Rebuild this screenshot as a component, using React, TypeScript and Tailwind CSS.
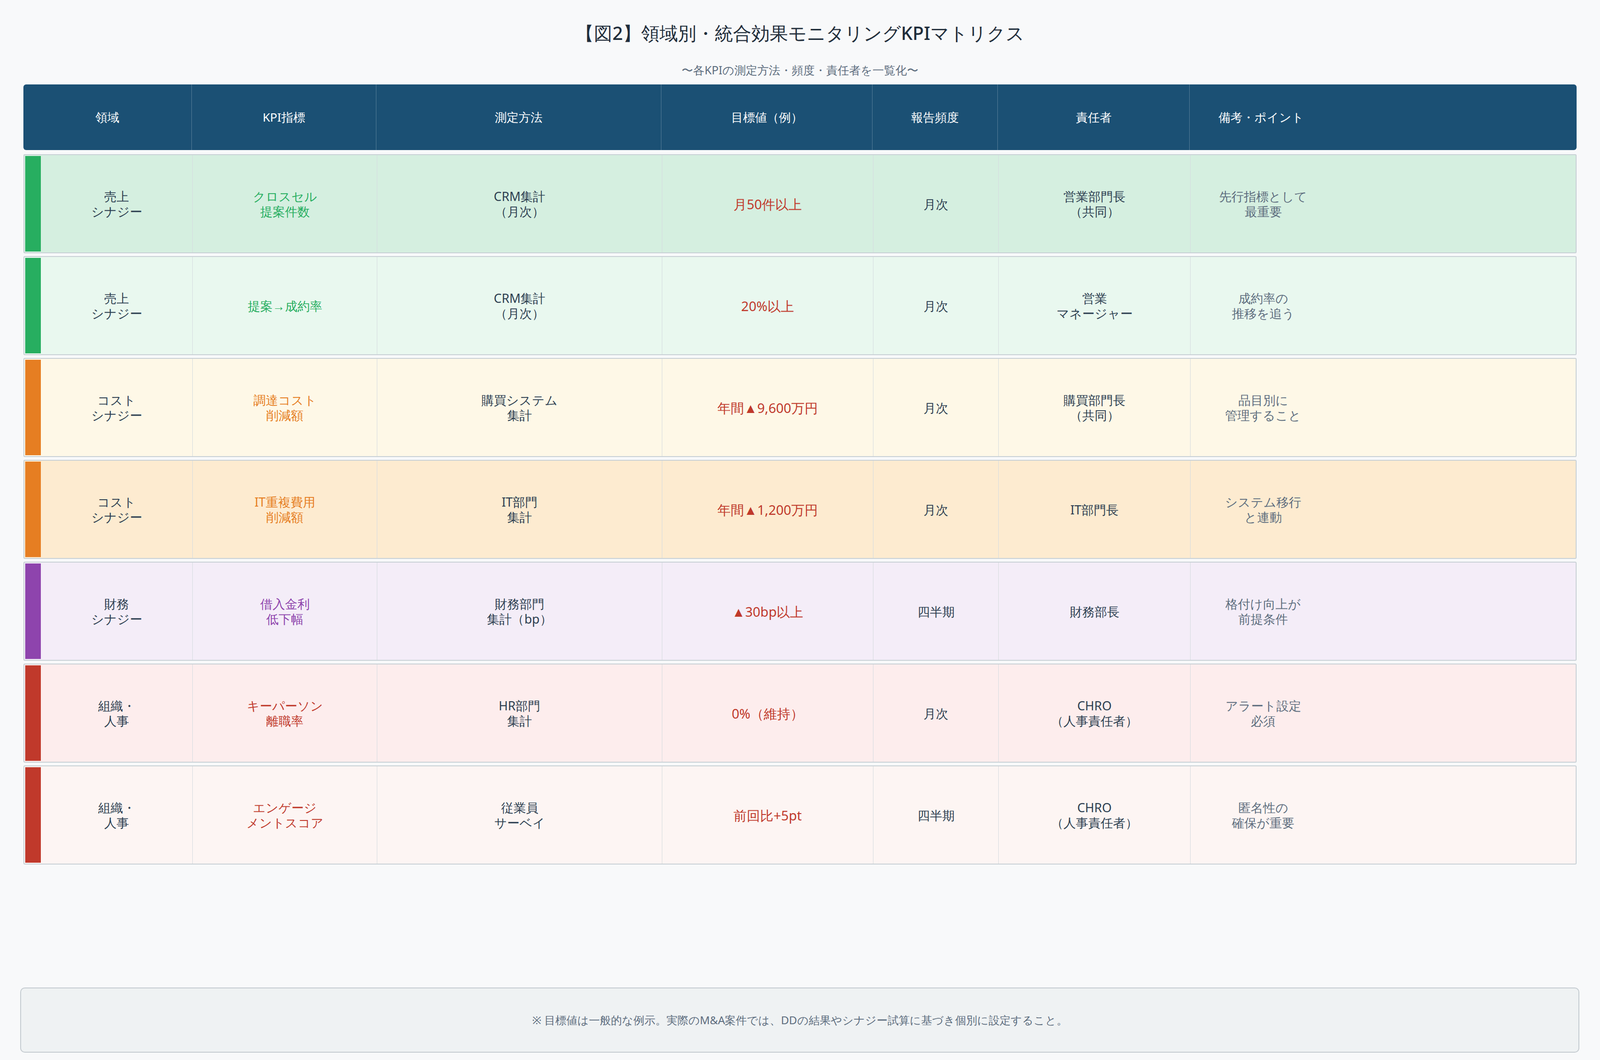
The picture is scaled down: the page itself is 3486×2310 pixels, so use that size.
const FONT = "font-['Noto_Sans_CJK_JP','Noto_Sans',sans-serif]";

const COLS = ['w-[367px]', 'w-[402px]', 'w-[621px]', 'w-[460px]', 'w-[273px]', 'w-[418px]', 'flex-1'];
const HEADERS = ['領域', 'KPI指標', '測定方法', '目標値（例）', '報告頻度', '責任者', '備考・ポイント'];

type Row = {
  bg: string; bar: string; kpiColor: string;
  area: string; kpi: string; method: string; target: string; freq: string; owner: string; note: string;
};

const ROWS: Row[] = [
  { bg: 'bg-[#d5efe0]', bar: 'bg-[#27ae60]', kpiColor: 'text-[#27ae60]', area: '売上\nシナジー', kpi: 'クロスセル\n提案件数', method: 'CRM集計\n（月次）', target: '月50件以上', freq: '月次', owner: '営業部門長\n（共同）', note: '先行指標として\n最重要' },
  { bg: 'bg-[#e9f8ef]', bar: 'bg-[#27ae60]', kpiColor: 'text-[#27ae60]', area: '売上\nシナジー', kpi: '提案→成約率', method: 'CRM集計\n（月次）', target: '20%以上', freq: '月次', owner: '営業\nマネージャー', note: '成約率の\n推移を追う' },
  { bg: 'bg-[#fef8e7]', bar: 'bg-[#e67e22]', kpiColor: 'text-[#e67e22]', area: 'コスト\nシナジー', kpi: '調達コスト\n削減額', method: '購買システム\n集計', target: '年間▲9,600万円', freq: '月次', owner: '購買部門長\n（共同）', note: '品目別に\n管理すること' },
  { bg: 'bg-[#fdebd0]', bar: 'bg-[#e67e22]', kpiColor: 'text-[#e67e22]', area: 'コスト\nシナジー', kpi: 'IT重複費用\n削減額', method: 'IT部門\n集計', target: '年間▲1,200万円', freq: '月次', owner: 'IT部門長', note: 'システム移行\nと連動' },
  { bg: 'bg-[#f4edf8]', bar: 'bg-[#8e44ad]', kpiColor: 'text-[#8e44ad]', area: '財務\nシナジー', kpi: '借入金利\n低下幅', method: '財務部門\n集計（bp）', target: '▲30bp以上', freq: '四半期', owner: '財務部長', note: '格付け向上が\n前提条件' },
  { bg: 'bg-[#fdeded]', bar: 'bg-[#c0392b]', kpiColor: 'text-[#c0392b]', area: '組織・\n人事', kpi: 'キーパーソン\n離職率', method: 'HR部門\n集計', target: '0%（維持）', freq: '月次', owner: 'CHRO\n（人事責任者）', note: 'アラート設定\n必須' },
  { bg: 'bg-[#fdf5f3]', bar: 'bg-[#c0392b]', kpiColor: 'text-[#c0392b]', area: '組織・\n人事', kpi: 'エンゲージ\nメントスコア', method: '従業員\nサーベイ', target: '前回比+5pt', freq: '四半期', owner: 'CHRO\n（人事責任者）', note: '匿名性の\n確保が重要' },
];

function Cell({ w, children, className = '', last = false }: { w: string; children: React.ReactNode; className?: string; last?: boolean }) {
  return (
    <div className={`${w} h-full flex items-center justify-center text-center whitespace-pre-line ${last ? '' : 'border-r border-[#d5dbdf]'} ${className}`}>
      {children}
    </div>
  );
}

export default function App() {
  return (
    <div className={`min-h-[2310px] w-[3486px] bg-[#f8f9fa] ${FONT} flex flex-col`}>
      <h1 className="pt-[44px] text-center text-[40px] leading-[56px] font-medium text-[#1f2d3a]">
        【図2】領域別・統合効果モニタリングKPIマトリクス
      </h1>
      <p className="mt-[36px] text-center text-[25px] leading-[32px] text-[#5d6d7e]">
        〜各KPIの測定方法・頻度・責任者を一覧化〜
      </p>

      <div className="ml-[51px] w-[3384px] mt-[16px]">
        {/* header */}
        <div className="flex h-[143px] bg-[#1b5074] rounded-[6px] text-white text-[26px]">
          {HEADERS.map((h, i) => (
            <div key={h} className={`${COLS[i]} h-full flex items-center ${i === 6 ? 'pl-[63px]' : 'justify-center border-r border-white/25'}`}>
              {h}
            </div>
          ))}
        </div>

        {/* rows */}
        <div className="mt-[9px] flex flex-col gap-[6px]">
          {ROWS.map((r, i) => (
            <div key={i} className={`relative flex h-[216px] ${r.bg} border-2 border-[#c9d1d6] rounded-[3px] text-[27px] leading-[33px] text-[#2c3e50]`}>
              <div className={`absolute left-[2px] top-[2px] bottom-[2px] w-[34px] ${r.bar}`} />
              <Cell w={COLS[0]} className="pl-[36px]">{r.area}</Cell>
              <Cell w={COLS[1]} className={r.kpiColor}>{r.kpi}</Cell>
              <Cell w={COLS[2]}>{r.method}</Cell>
              <Cell w={COLS[3]} className="text-[#c0392b] text-[29px]">{r.target}</Cell>
              <Cell w={COLS[4]}>{r.freq}</Cell>
              <Cell w={COLS[5]}>{r.owner}</Cell>
              <Cell w={COLS[6]} last className="!justify-start">
                <div className="w-[316px] text-center text-[#5d6d7e]">{r.note}</div>
              </Cell>
            </div>
          ))}
        </div>
      </div>

      <div className="mt-[268px] ml-[44px] w-[3397px] h-[142px] bg-[#eff2f3] border-2 border-[#c5ccd1] rounded-[10px] flex items-center justify-center text-[24px] text-[#5d6d7e]">
        ※ 目標値は一般的な例示。実際のM&amp;A案件では、DDの結果やシナジー試算に基づき個別に設定すること。
      </div>
    </div>
  );
}
